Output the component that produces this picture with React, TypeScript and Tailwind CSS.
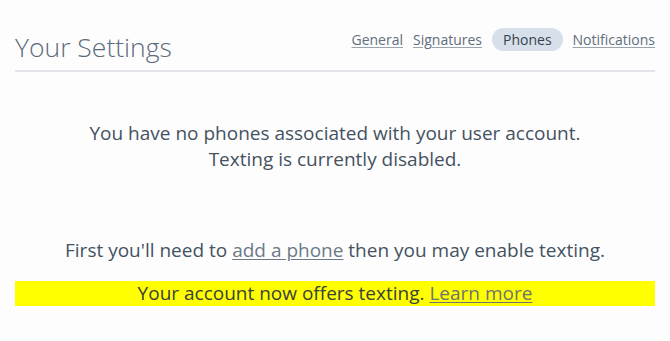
import React from "react";

export default function App() {
  return (
    <div className="w-[670px] h-[341px] bg-[#fdfdfe] overflow-hidden" style={{ fontFamily: '"Open Sans", sans-serif' }}>
      <div className="mx-[15px] pt-[28px]">
        <div className="flex items-end justify-between border-b-2 border-[#e0e3ea] pb-[4px]">
          <h1 className="text-[26.5px] leading-[38px] font-light text-[#5c6b7a]">Your Settings</h1>
          <nav className="flex items-center gap-[10px] text-[14px] text-[#5f6d7c] pb-[15px]">
            <a className="underline underline-offset-2 decoration-[#9aa4ae]">General</a>
            <a className="underline underline-offset-2 decoration-[#9aa4ae]">Signatures</a>
            <span className="rounded-full bg-[#d6dfea] px-[11px] py-[1px] text-[#36434f]">Phones</span>
            <a className="underline underline-offset-2 decoration-[#9aa4ae]">Notifications</a>
          </nav>
        </div>
        <div className="pt-[48px] text-center text-[19px] leading-[26px] text-[#44525f]">
          <p>You have no phones associated with your user account.</p>
          <p>Texting is currently disabled.</p>
        </div>
        <p className="pt-[65px] text-center text-[19px] leading-[26px] text-[#44525f]">
          First you'll need to <a className="underline underline-offset-2 text-[#6c7a88]">add a phone</a> then you may enable texting.
        </p>
        <div className="mt-[18px] h-[25px] bg-[#ffff00] flex items-center justify-center text-[19px] text-[#3a4138]">
          Your account now offers texting.&nbsp;<a className="underline underline-offset-2 text-[#6e7470]">Learn more</a>
        </div>
      </div>
    </div>
  );
}
